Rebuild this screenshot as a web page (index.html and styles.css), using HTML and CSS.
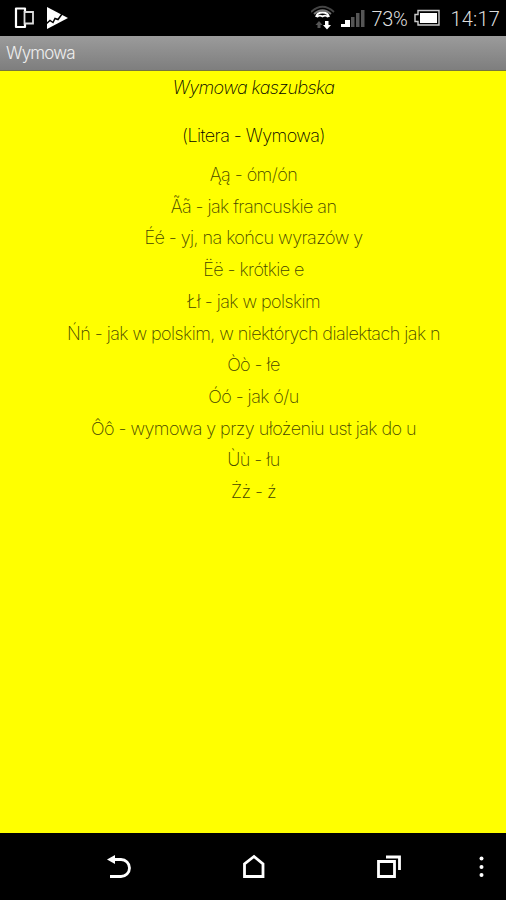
FILE: index.html
```html
<!DOCTYPE html>
<html lang="pl">
<head>
<meta charset="UTF-8">
<title>Wymowa</title>
<link rel="stylesheet" href="styles.css">
</head>
<body>

<div class="status-bar">
	<svg class="notifications" width="70" height="35" viewBox="0 0 70 35">
		<g fill="none" stroke="#fff">
			<path d="M25 12V8.500H16V27H25V24" stroke-width="2.200" stroke-linejoin="round"/>
			<path d="M24.500 12H33V23.500H24.500Z" stroke="#ddd" stroke-width="1.800"/>
		</g>
		<path d="M47 7L68 18L47 29Z" fill="#fff"/>
		<path d="M46 24L50 20.500L53 22.500L55 18.500L58 19.500L62 14" fill="none" stroke="#000" stroke-width="1.500"/>
	</svg>
	<div class="status-right">
		<svg width="56" height="35" viewBox="0 0 56 35">
			<g fill="none" stroke="#444" stroke-width="1.800">
				<path d="M0 12Q11.500 1.500 23 12"/>
				<path d="M3 14Q11.500 6.500 20 14" stroke="#777"/>
			</g>
			<path d="M5 17Q6 12.500 11.500 12.500Q17 12.500 18 17M6 17Q8.500 14.500 11.500 16.500Q14.500 14.500 17 17" fill="none" stroke="#fff" stroke-width="1.800"/>
			<path d="M8 21L11.500 25H9.500V28H6.500V25H4.500Z" fill="#555"/>
			<path d="M14 21H17.500V25H20L16 29.500L12 25H14Z" fill="#fff"/>
			<path d="M30 24H34V27H30ZM34 20H39V27H34Z" fill="#fff"/>
			<path d="M40 17H43.500V27H40ZM45 13H48.500V27H45ZM50 10H53.500V27H50Z" fill="#555"/>
		</svg>
		<span class="battery-level">73%</span>
		<svg width="30" height="35" viewBox="0 0 30 35">
			<path d="M6 10.500H27V25H6V21.500H3V14.500H6Z" fill="none" stroke="#ccc" stroke-width="1.400"/>
			<path d="M8 13H25V23H8Z" fill="#fff"/>
		</svg>
		<span class="clock">14:17</span>
	</div>
</div>

<div class="title-bar"><span>Wymowa</span></div>

<div class="content">
	<h1>Wymowa kaszubska</h1>
	<h2>(Litera - Wymowa)</h2>
	<ul class="letters">
		<li>Ąą - óm/ón</li>
		<li>Ãã - jak francuskie an</li>
		<li>Éé - yj, na końcu wyrazów y</li>
		<li>Ëë - krótkie e</li>
		<li>Łł - jak w polskim</li>
		<li>Ńń - jak w polskim, w niektórych dialektach jak n</li>
		<li>Òò - łe</li>
		<li>Óó - jak ó/u</li>
		<li>Ôô - wymowa y przy ułożeniu ust jak do u</li>
		<li>Ùù - łu</li>
		<li>Żż - ź</li>
	</ul>
</div>

<div class="nav-bar">
	<svg width="506" height="67" viewBox="0 0 506 67">
		<g fill="none" stroke="#fff" stroke-width="2.800">
			<path d="M112 26.500H121A8.500 8.500 0 0 1 121 43.500H110"/>
			<path d="M244.500 43.500V31L254 23.500L263 31V43.500Z"/>
			<path d="M378.500 28.500H394.500V43.500H378.500Z"/>
			<path d="M386 24H399.500V37"/>
		</g>
		<path d="M107 26.500L115 22V31Z" fill="#fff"/>
		<g fill="#fff">
			<circle cx="481.500" cy="25.500" r="2"/>
			<circle cx="481.500" cy="34" r="2"/>
			<circle cx="481.500" cy="42" r="2"/>
		</g>
	</svg>
</div>

</body>
</html>
```
FILE: styles.css
```css
body {
	margin: 0;
	height: 900px;
	display: flex;
	flex-direction: column;
	background: #000;
	font-family: Inter, "Liberation Sans", sans-serif;
	font-weight: 200;
}

.status-bar {
	height: 36px;
	display: flex;
	justify-content: space-between;
	color: #ddd;
	font-family: Roboto, sans-serif;
	font-weight: 300;
	font-size: 20px;
	line-height: 38px;
}

.status-right {
	display: flex;
	padding-right: 6px;
}

.battery-level {
	margin-left: 4px;
	width: 41px;
	letter-spacing: -0.3px;
}

.clock {
	margin-left: 8px;
	letter-spacing: 0.2px;
}

.title-bar {
	height: 34px;
	padding-left: 6px;
	background: linear-gradient(#9b9b9b, #7e7e7e);
	border-bottom: 1px solid #77773c;
	color: #eee;
	font-size: 17px;
	font-weight: 300;
	letter-spacing: -0.8px;
	line-height: 35px;
}

.content {
	flex: 1;
	padding-left: 1px;
	background: #ff0;
	color: #000;
	text-align: center;
	font-size: 18px;
	letter-spacing: -0.56px;
}

h1, h2 {
	margin: 0;
	font-size: 18px;
	font-weight: 250;
	line-height: 32px;
}

h1 {
	margin-top: 1px;
	font-style: italic;
}

h2 {
	margin-top: 16px;
}

.letters {
	list-style: none;
	margin: 7px 0 0;
	padding: 0;
	color: #444400;
	line-height: 31.7px;
}

.nav-bar {
	height: 67px;
}
```
